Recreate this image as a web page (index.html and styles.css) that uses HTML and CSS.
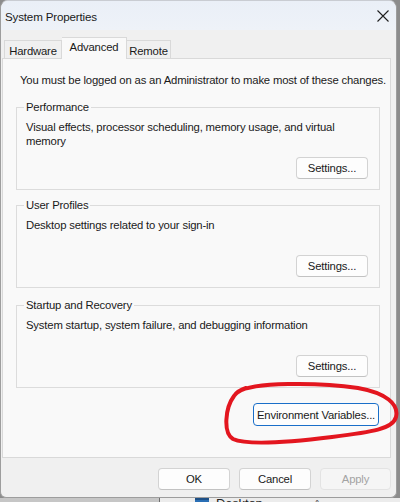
FILE: index.html
```html
<!DOCTYPE html>
<html>
<head>
<meta charset="utf-8">
<title>System Properties</title>
<link rel="stylesheet" href="styles.css">
</head>
<body>
<div class="screen">
  <div class="window">
    <div class="titlebar">
      <span class="title">System Properties</span>
      <span class="close" aria-label="Close">
        <svg width="12" height="12" viewBox="0 0 12 12"><path d="M0.5 0.5 L11.5 11.5 M11.5 0.5 L0.5 11.5" stroke="#1f1f1f" stroke-width="1.1" fill="none"/></svg>
      </span>
    </div>
    <div class="tabs">
      <div class="tab tab-hw">Hardware</div>
      <div class="tab tab-adv active">Advanced</div>
      <div class="tab tab-rem">Remote</div>
    </div>
    <div class="panel">
      <p class="intro">You must be logged on as an Administrator to make most of these changes.</p>
      <fieldset class="group group-perf">
        <legend>Performance</legend>
        <div class="group-body">
          <p class="desc">Visual effects, processor scheduling, memory usage, and virtual memory</p>
          <button class="btn settings">Settings...</button>
        </div>
      </fieldset>
      <fieldset class="group group-user">
        <legend>User Profiles</legend>
        <div class="group-body">
          <p class="desc">Desktop settings related to your sign-in</p>
          <button class="btn settings">Settings...</button>
        </div>
      </fieldset>
      <fieldset class="group group-start">
        <legend>Startup and Recovery</legend>
        <div class="group-body">
          <p class="desc">System startup, system failure, and debugging information</p>
          <button class="btn settings">Settings...</button>
        </div>
      </fieldset>
      <div class="env-row">
        <button class="btn btn-default">Environment Variables...</button>
      </div>
    </div>
    <div class="footer">
      <button class="btn ok">OK</button>
      <button class="btn cancel">Cancel</button>
      <button class="btn apply" disabled>Apply</button>
    </div>
  </div>
  <div class="desktop-peek">
    <div class="peek-left"></div>
    <div class="peek-right">
      <span class="peek-icon"></span>
      <span class="peek-text">Desktop</span>
      <span class="peek-chev">^</span>
    </div>
  </div>
  <svg class="annotation" width="400" height="502" viewBox="0 0 400 502">
    <path d="M238 392 C252 382, 318 382, 358 388 C386 393, 399 404, 396 417 C393 429, 372 432, 332 437 C292 442, 248 446, 233 439 C223 433, 225 408, 234 396 C236 393, 240 390, 246 388" fill="none" stroke="#e3161f" stroke-width="4" stroke-linecap="round" stroke-linejoin="round"/>
  </svg>
</div>
</body>
</html>
```
FILE: styles.css
```css
* { box-sizing: border-box; }

html, body {
  margin: 0;
  padding: 0;
}

body {
  width: 400px;
  height: 502px;
  overflow: hidden;
  background: #8c8c8c;
  font-family: "Liberation Sans", Arial, sans-serif;
  font-size: 11.3px;
  letter-spacing: -0.17px;
  color: #1a1a1a;
}

.screen {
  position: relative;
  width: 400px;
  height: 502px;
}

.window {
  width: 397px;
  height: 498px;
  background: #f0f0f0;
  border: 1px solid #9d9d9d;
  border-top-color: #c9ccd2;
  border-radius: 8px 8px 6px 6px;
  overflow: hidden;
  display: flex;
  flex-direction: column;
}

.titlebar {
  height: 29px;
  flex: none;
  display: flex;
  align-items: center;
  justify-content: space-between;
  padding: 0 7px 0 4px;
  background: linear-gradient(180deg, #eaeff7 0%, #eef2f8 100%);
}

.title {
  font-size: 11.6px;
  color: #1a1a1a;
  padding-top: 1px;
}

.close {
  display: flex;
  width: 12px;
  height: 12px;
}

.tabs {
  height: 21px;
  margin-top: 7px;
  padding-left: 3px;
  display: flex;
  align-items: flex-end;
  flex: none;
}

.tab {
  height: 18px;
  border: 1px solid #d9d9d9;
  border-bottom: none;
  background: #f0f0f0;
  text-align: center;
  line-height: 18px;
  color: #1a1a1a;
  padding-top: 1px;
  white-space: nowrap;
}

.tab-hw { width: 58px; }
.tab-adv { width: 65px; }
.tab-rem { width: 44px; border-left: none; }

.tab.active {
  height: 22px;
  margin-bottom: -1px;
  background: #f9f9f9;
  line-height: 18px;
  padding-top: 0;
  position: relative;
  z-index: 1;
  border-left: none;
}

.panel {
  margin-left: 1px;
  width: 389px;
  height: 400px;
  flex: none;
  border: 1px solid #d9d9d9;
  background: #f9f9f9;
  padding: 14px 0 0 13px;
}

.intro {
  margin: 0 0 13px 0;
  padding-left: 4px;
  line-height: 14px;
  white-space: nowrap;
}

.group {
  margin: 0;
  width: 364px;
  border: 1px solid #dcdcdc;
  padding: 6px 0 0 9px;
  min-width: 0;
}

.group-user { margin-top: 8px; }
.group-start { margin-top: 10px; }

.group legend {
  padding: 0 2px;
  margin-left: -2px;
  line-height: 14px;
}

.group-body {
  height: 69px;
  display: flex;
  flex-direction: column;
  padding-right: 11px;
}

.desc {
  margin: 0;
  line-height: 14px;
  padding-right: 12px;
}

.btn {
  font-family: "Liberation Sans", Arial, sans-serif;
  font-size: 11.3px;
  letter-spacing: -0.17px;
  color: #1a1a1a;
  background: #fdfdfd;
  border: 1px solid #d3d3d3;
  border-bottom-color: #c2c2c2;
  border-radius: 4px;
  height: 22px;
  padding: 0;
  line-height: 20px;
  white-space: nowrap;
}

.settings {
  width: 72px;
  margin-top: auto;
  margin-bottom: 10px;
  align-self: flex-end;
}

.env-row {
  width: 364px;
  display: flex;
  justify-content: flex-end;
  padding-right: 1px;
  margin-top: 15px;
}

.btn-default {
  width: 126px;
  height: 23px;
  border: 1px solid #1a6fc9;
}

.footer {
  display: flex;
  justify-content: flex-end;
  gap: 9px;
  padding: 10px 5px 0 0;
}

.ok, .cancel { width: 72px; }
.apply {
  width: 71px;
  background: #f5f5f5;
  border-color: #e3e3e3;
  color: #a3a3a3;
}

.desktop-peek {
  height: 4px;
  display: flex;
  overflow: hidden;
}

.peek-left {
  width: 160px;
  background: #c6c6c6;
  border-right: 1px solid #6f6f6f;
}

.peek-right {
  flex: 1;
  background: #ececec;
  display: flex;
  align-items: flex-start;
  padding-left: 35px;
  gap: 7px;
}

.peek-icon {
  width: 14px;
  height: 12px;
  background: #2a6fb5;
  border-top: 2px solid #1d4f86;
}

.peek-text {
  font-size: 13px;
  line-height: 13px;
  margin-top: -1px;
  color: #222;
}

.peek-chev {
  margin-left: 45px;
  color: #555;
  line-height: 12px;
}

.annotation {
  position: absolute;
  left: 0;
  top: 0;
  pointer-events: none;
}
```
